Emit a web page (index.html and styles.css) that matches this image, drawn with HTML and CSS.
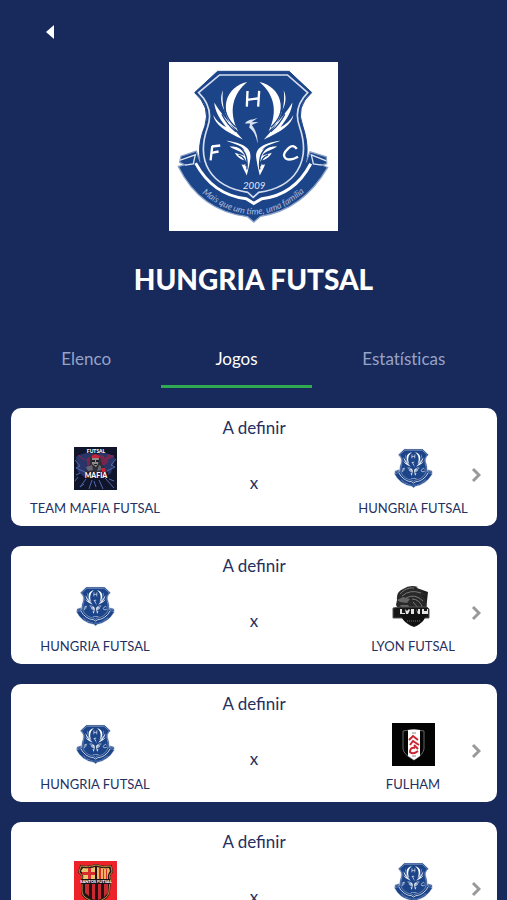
FILE: index.html
```html
<!DOCTYPE html>
<html lang="pt-BR">
<head>
  <meta charset="UTF-8"/>
  <meta name="viewport" content="width=device-width, initial-scale=1.0"/>
  <title>Hungria Futsal</title>
  <link rel="stylesheet" href="styles.css">
</head>
<body>
  <!-- escudos -->
  <svg class="sprite" aria-hidden="true">
    <defs>
      <path id="ribbon-line" d="M112 412 Q205 490 285 488 Q365 488 450 408"/>
      <g id="wing">
        <path d="M263 90 C200 104 170 176 236 239 C204 176 222 124 263 90z"/>
        <path d="M190 115 C180 138 184 165 204 190 C214 208 222 222 228 232 C208 212 182 182 164 152 C166 178 180 202 200 226 C184 218 170 206 161 189 C166 218 196 238 250 263 C228 238 206 214 196 180 C188 158 188 136 190 115z"/>
        <path d="M200 266 C232 272 276 280 273 316 C270 340 266 352 262 371 C256 358 250 348 246 337 C256 342 260 338 258 327 C246 324 232 316 226 303 C238 308 250 310 255 312 C248 296 220 294 210 283 C226 284 244 286 256 296 C244 278 218 276 200 266z"/>
        <path d="M198 145 C188 172 206 208 229 226 M187 187 Q202 217 229 240 M226 281 Q269 294 262 353 M237 309 Q260 316 260 343" fill="none" stroke="#1c4489" stroke-width="4"/>
      </g>
    </defs>
    <symbol id="hungria" viewBox="28 30 508 508">
      <path d="M56 344 L76 339 L60 332 L64 313 L110 298 L122 330 L440 330 L452 300 L501 315 L502 336 L487 339 L505 347 Q430 475 303 494 L283 511 L264 495 Q120 476 56 344z" fill="#1c4489" stroke="#8ba2c8" stroke-width="4"/>
      <path d="M62 325 L107 309 L101 336 L76 340 M501 327 L456 309 L462 336 L487 340" fill="none" stroke="#dce4f1" stroke-width="4"/>
      <path d="M108 334 Q160 430 260 441 L283 455 L307 441 Q405 430 454 336" fill="none" stroke="#fff" stroke-width="9"/>
      <path d="M174 58 L389 58 L457 122 Q407 165 430 222 C470 340 416 415 302 431 L281 446 L262 431 C145 413 90 337 136 222 Q154 165 105 122z" fill="#1c4489" stroke="#1c4489" stroke-width="3"/>
      <path d="M180 69 L384 69 L445 122 Q399 168 421 226 C456 330 407 407 298 422 L281 437 L265 422 C154 405 107 330 144 226 Q164 168 117 122z" fill="none" stroke="#d5deee" stroke-width="5"/>
      <use href="#wing" fill="#fff"/>
      <use href="#wing" fill="#fff" transform="matrix(-1 0 0 1 563 0)"/>
      <path d="M256 215 Q264 204 279 203 L294 198 L276 211 L297 210 L277 219 Q296 244 294 275 Q289 242 269 227 L272 215z" fill="#dce4f1"/>
      <path d="M264 117 L262 164 M299 117 L296 164 M263 144 L298 139 M158 283 L153 326 M157 284 L182 281 M156 303 L177 299 M412 291 Q402 276 388 288 Q365 309 379 320 Q393 328 416 315" fill="none" stroke="#fff" stroke-width="7"/>
      <text x="284" y="411" class="crest-year">2009</text>
      <text class="crest-motto"><textPath href="#ribbon-line" startOffset="50%">Mais que um time, uma família</textPath></text>
    </symbol>
    <symbol id="mafia" viewBox="0 0 43 43">
      <path d="M0 0h43v43H0z" fill="#10152c"/>
      <path d="M2 10 Q10 4 22 7 Q34 4 41 11 L37 26 L30 31 H12 L4 25z" fill="#293569"/>
      <path d="M11 13 L4 8 M32 13 L40 9 L34 8z M13 12 L19 9 L29 9 L34 15 L28 19 L14 18z" fill="#74264c" stroke="#84264c"/>
      <path d="M12 32 L6 40 L10 37 M18 33 L15 42 M25 33 L29 42 M31 31 L40 41 M11 25 L2 21 L6 19 L1 13 M33 24 L41 20 L37 18 L42 12 M4 30 L1 34 M20 34 L22 40 M35 32 L40 34 M6 26 L2 28" fill="none" stroke="#4d68b0"/>
      <path d="M16 10 Q21 4 26 10 L28 17 L34 26 H11 L16 17z" fill="#302d35"/>
      <path d="M18 11 L25 11 L24 17 L22 20 L18 17z" fill="#8f8b91"/>
      <path d="M18 13h3v2h-3z M22 13h3v2h-3z M20 17h3v1h-3z" fill="#222"/>
      <path d="M17 9 L21 7 L26 9 L25 11 H18z M27 21 L31 21 L32 25 L28 25z" fill="#c52337"/>
      <path d="M12 20 L18 18 L19 23 L14 24z M25 18 L27 19 L27 23 L23 24z" fill="#666475"/>
      <path d="M11 25h23v6H11z" fill="#271323"/>
      <text x="22" y="6" class="logo-text mafia-top">FUTSAL</text>
      <text x="22" y="31" class="logo-text mafia-name">MAFIA</text>
    </symbol>
    <symbol id="lyon" viewBox="0 0 43 43">
      <path d="M7 7 L22 2 L36 7 L34 25 Q35 37 22 42 Q8 37 8 25z" fill="#202020"/>
      <path d="M5 15 Q4 7 11 4 Q18 -1 26 2 L22 4 Q31 3 35 12 L29 9 Q36 15 34 24 L31 20 L32 27 L27 23 L24 26 H7 L4 20z" fill="#292929"/>
      <path d="M8 9 Q14 2 22 3 M10 11 Q18 4 29 8 M14 13 Q23 8 31 16 M20 14 Q28 14 31 24 M21 17 L27 24" fill="none" stroke="#777"/>
      <path d="M5 15 L11 12 L18 14 L15 18 L8 17z M8 20 L16 20 L19 24 L10 23z" fill="#666"/>
      <path d="M1 23 L8 22 H35 L37 24 V33 H31 V29 H11 V33 H1z" fill="#161616" stroke="#555"/>
      <path d="M8 28 H34 Q34 37 22 41 Q10 37 8 28z" fill="#111"/>
      <path d="M8 24h2v4h3v1H8z M13 24l2 2 2-2 1 1-2 4h-2z M19 24h3v5h-3z M24 24l2 3v-3h2v5h-2z M30 24h2v2h3v-2h1v5h-6z" fill="#e3e3e3"/>
      <path d="M15 36 H28" stroke="#777" stroke-dasharray="1 1"/>
    </symbol>
    <symbol id="fulham" viewBox="0 0 43 43">
      <path d="M0 0h43v43H0z" fill="#030303"/>
      <path d="M11 8 Q21 5 32 8 V26 Q31 32 22 37 Q12 32 11 26z" fill="#050505" stroke="#666"/>
      <path d="M16 7 Q22 6 28 7 V33 L22 37 L16 33z" fill="#fff"/>
      <path d="M17 17 L21 13 L26 17 M18 22 L21 18 L27 22 M23 25 Q18 24 18 29 Q21 32 26 28 M22 22 L26 26" fill="none" stroke="#cc2631" stroke-width="2"/>
      <path d="M20 10h4 M20 33h4" stroke="#888"/>
    </symbol>
    <symbol id="barca" viewBox="0 0 43 43">
      <path d="M0 0h43v43H0z" fill="#ee2229"/>
      <path d="M7 5 Q14 7 22 4 Q30 7 37 5 L38 11 Q34 14 36 18 L35 31 Q34 38 22 41 Q9 38 8 31 L8 18 Q9 14 5 11z" fill="#201215" stroke="#302015" stroke-width="2"/>
      <path d="M9 7 Q16 8 21 6 V18 H9 Q10 13 7 10z" fill="#edc46d"/>
      <path d="M23 6 Q29 8 35 7 L36 10 Q33 14 34 18 H23z" fill="#f1b264"/>
      <path d="M14 7h3v11h-3z M8 11h13v3H8z M25 7h2v11h-2z M29 8h1v10h-1z M32 8h1v10h-1z" fill="#d82b2b"/>
      <path d="M11 23h4v12l-4-3z M18 23h3v16l-3-1z M24 23h3v15l-3 1z M30 23h4v9l-4 4z" fill="#c72a31"/>
      <path d="M7 5 Q14 7 22 4 Q30 7 37 5 L38 11 Q34 14 36 18 L35 31 Q34 38 22 41 Q9 38 8 31 L8 18 Q9 14 5 11z" fill="none" stroke="#b28a46"/>
      <path d="M7 18h29v5H7z" fill="#171316"/>
      <text x="22" y="22" class="logo-text barca-name">SANTOS FUTSAL</text>
    </symbol>
  </svg>

  <div class="app">
    <header class="top">
      <button class="back" type="button" aria-label="Voltar">
        <svg viewBox="0 0 8 14"><path d="M8 0v14L0 7z"/></svg>
      </button>
      <div class="badge"><svg role="img" aria-label="Escudo Hungria Futsal"><use href="#hungria"/></svg></div>
      <h1>HUNGRIA FUTSAL</h1>
    </header>

    <nav class="tabs">
      <a href="#elenco">Elenco</a>
      <a href="#jogos" class="active" aria-current="page">Jogos</a>
      <a href="#estatisticas">Estatísticas</a>
    </nav>

    <main class="games" id="jogos">
      <a class="game" href="#jogo-1">
        <span class="date">A definir</span>
        <span class="team"><svg class="logo"><use href="#mafia"/></svg><span>TEAM MAFIA FUTSAL</span></span>
        <span class="versus">x</span>
        <span class="team"><svg class="logo"><use href="#hungria"/></svg><span>HUNGRIA FUTSAL</span></span>
        <svg class="chevron" viewBox="0 0 10 16"><path d="M2 2l6 6-6 6"/></svg>
      </a>
      <a class="game" href="#jogo-2">
        <span class="date">A definir</span>
        <span class="team"><svg class="logo"><use href="#hungria"/></svg><span>HUNGRIA FUTSAL</span></span>
        <span class="versus">x</span>
        <span class="team"><svg class="logo"><use href="#lyon"/></svg><span>LYON FUTSAL</span></span>
        <svg class="chevron" viewBox="0 0 10 16"><path d="M2 2l6 6-6 6"/></svg>
      </a>
      <a class="game" href="#jogo-3">
        <span class="date">A definir</span>
        <span class="team"><svg class="logo"><use href="#hungria"/></svg><span>HUNGRIA FUTSAL</span></span>
        <span class="versus">x</span>
        <span class="team"><svg class="logo"><use href="#fulham"/></svg><span>FULHAM</span></span>
        <svg class="chevron" viewBox="0 0 10 16"><path d="M2 2l6 6-6 6"/></svg>
      </a>
      <a class="game" href="#jogo-4">
        <span class="date">A definir</span>
        <span class="team"><svg class="logo"><use href="#barca"/></svg><span>SANTOS FUTSAL</span></span>
        <span class="versus">x</span>
        <span class="team"><svg class="logo"><use href="#hungria"/></svg><span>HUNGRIA FUTSAL</span></span>
        <svg class="chevron" viewBox="0 0 10 16"><path d="M2 2l6 6-6 6"/></svg>
      </a>
    </main>
  </div>
</body>
</html>
```
FILE: styles.css
```css
* { box-sizing:border-box; }
body { margin:0; background:#18295b; color:#fff; font-family:Lato, "Liberation Sans", sans-serif; }
a { color:inherit; text-decoration:none; }
.sprite { position:absolute; width:0; height:0; }
.app { height:100vh; overflow-y:auto; scrollbar-width:none; }

.top { display:flex; flex-direction:column; align-items:center; padding:16px 11px 0; }
.back { align-self:flex-start; display:flex; align-items:center; justify-content:center; width:32px; height:32px; margin-left:23px; padding:0; background:none; border:none; cursor:pointer; }
.back svg { width:8px; height:14px; fill:#fff; }
.badge { width:169px; height:169px; margin-top:14px; background:#fff; }
.badge svg { display:block; width:100%; height:100%; }
h1 { margin:30px 0 0; font-size:28px; line-height:36px; font-weight:900; }

.tabs { display:grid; grid-template-columns:31% 31% 38%; margin:33px 11px 0; font-size:17px; line-height:24px; text-align:center; color:#96a3c6; font-variant-ligatures:none; }
.tabs a { padding:17px 0 14px; border-bottom:3px solid transparent; }
.tabs .active { color:#fff; border-color:#2faa50; }

.games { display:flex; flex-direction:column; gap:20px; padding:20px 10px 20px 11px; }
.game { position:relative; display:grid; grid-template-columns:168px 1fr 168px; padding:8px 0; background:#fff; border-radius:10px; color:#25305f; }
.date { grid-column:1 / -1; font-size:17px; line-height:24px; text-align:center; }
.team { display:flex; flex-direction:column; align-items:center; gap:8px; padding-top:7px; font-size:13px; line-height:20px; }
.logo { width:43px; height:43px; }
.versus { padding-top:31px; font-size:17px; line-height:24px; text-align:center; }
.chevron { position:absolute; right:16px; top:59px; width:10px; height:16px; fill:none; stroke:#999; stroke-width:3; }

/* textos dos escudos */
.crest-year { font-size:29px; font-style:italic; text-anchor:middle; fill:#e5ebf6; }
.crest-motto { font-size:27px; font-style:italic; text-anchor:middle; fill:#a9bbdc; }
.logo-text { font-weight:900; text-anchor:middle; fill:#fff; }
.mafia-top { font-size:5px; }
.mafia-name { font-size:7px; }
.barca-name { font-size:4px; }
```
